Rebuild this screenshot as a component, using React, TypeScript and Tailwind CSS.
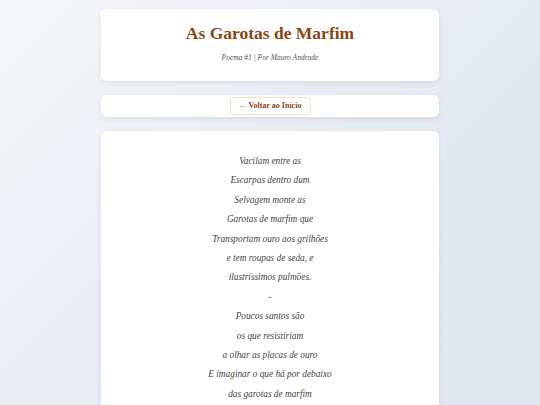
import React from "react";

const lines = [
  "Vacilam entre as",
  "Escarpas dentro dum",
  "Selvagem monte as",
  "Garotas de marfim que",
  "Transportam ouro aos grilhões",
  "e tem roupas de seda, e",
  "ilustríssimos pulmões.",
  "-",
  "Poucos santos são",
  "os que resistiriam",
  "a olhar as placas de ouro",
  "E imaginar o que há por debaixo",
  "das garotas de marfim",
];

export default function App() {
  return (
    <div
      className="min-h-[405px] w-full bg-[linear-gradient(135deg,#f6f7fa_0%,#e3e8f0_60%,#dfe5ee_100%)] pt-[9px] pb-10"
      style={{ fontFamily: '"Liberation Serif", Georgia, serif' }}
    >
      <div className="mx-auto flex w-[338px] flex-col gap-[14px]">
        <div className="flex h-[72px] flex-col items-center rounded-[6px] bg-white pt-[13px] shadow-[0_2px_6px_rgba(0,0,0,0.08)]">
          <h1 className="text-[17.5px] font-bold leading-[22px] text-[#8b4513]">As Garotas de Marfim</h1>
          <p className="mt-[9px] text-[7.5px] italic leading-[10px] text-[#555]">Poema #1 | Por Mauro Andrade</p>
        </div>
        <div className="flex h-[22px] items-center justify-center rounded-[6px] bg-white shadow-[0_2px_6px_rgba(0,0,0,0.08)]">
          <button className="flex h-[18px] w-[81px] items-center justify-center rounded-[3px] border border-[#f3e2c4] bg-white text-[8px] font-bold text-[#8b4513]">
            ← Voltar ao Início
          </button>
        </div>
        <div className="flex flex-col items-center rounded-[6px] bg-white pt-[21px] pb-16 shadow-[0_2px_6px_rgba(0,0,0,0.08)]">
          {lines.map((l, i) => (
            <p key={i} className="text-[9.3px] italic leading-[19.4px] text-[#444]">
              {l}
            </p>
          ))}
        </div>
      </div>
    </div>
  );
}
